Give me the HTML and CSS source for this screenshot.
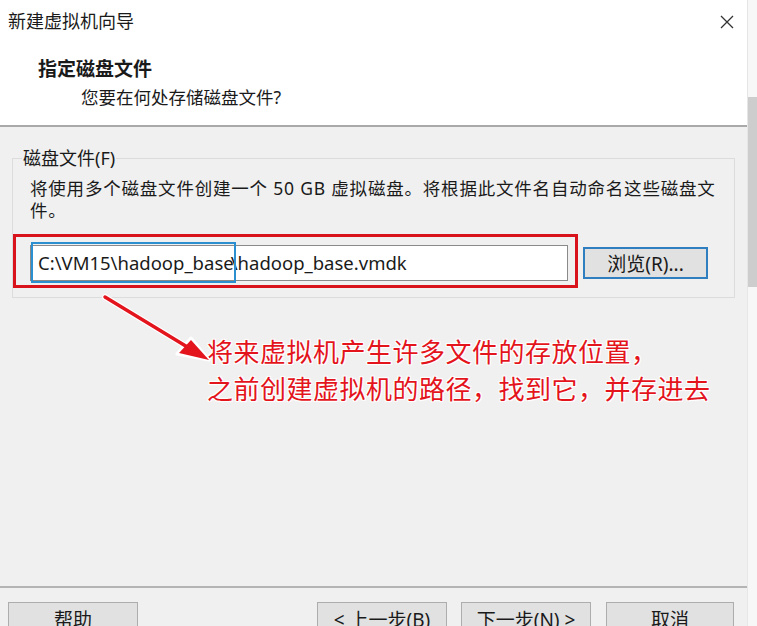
FILE: index.html
```html
<!DOCTYPE html>
<html lang="zh-CN">
<head>
  <meta charset="UTF-8">
  <title>新建虚拟机向导</title>
  <link rel="stylesheet" href="styles.css">
</head>
<body>
  <div class="window">
    <div class="main">
      <!-- Title and page header -->
      <header class="header">
        <div class="titlebar">
          <span class="title">新建虚拟机向导</span>
          <svg class="close" width="14" height="14" viewBox="0 0 14 14">
            <path d="M1 1 L13 13 M13 1 L1 13" stroke="#333" stroke-width="1.3" fill="none"/>
          </svg>
        </div>
        <div class="page-title">指定磁盘文件</div>
        <div class="page-sub">您要在何处存储磁盘文件?</div>
      </header>

      <!-- Disk file group -->
      <section class="content">
        <fieldset class="group">
          <legend>磁盘文件(F)</legend>
          <p class="desc">将使用多个磁盘文件创建一个 50 GB 虚拟磁盘。将根据此文件名自动命名这些磁盘文件。</p>
          <div class="file-row">
            <div class="red-box">
              <div class="path-input">
                <span class="mark">C:\VM15\hadoop_base</span>\hadoop_base.vmdk
              </div>
            </div>
            <button class="btn browse">浏览(R)...</button>
          </div>
        </fieldset>

        <div class="note">
          <svg class="arrow" width="120" height="75" viewBox="0 0 120 75">
            <path d="M8 5 L92 56" stroke="#fff" stroke-width="6" stroke-linecap="round"/>
            <path d="M112 68 L80 62 L94 46 Z" fill="#fff" stroke="#fff" stroke-width="3" stroke-linejoin="round"/>
            <path d="M8 5 L92 56" stroke="#e3141c" stroke-width="3.5" stroke-linecap="round"/>
            <path d="M112 68 L82 61 L94 48 Z" fill="#e3141c"/>
          </svg>
          <p class="note-text">将来虚拟机产生许多文件的存放位置，<br>之前创建虚拟机的路径，找到它，并存进去</p>
        </div>
      </section>

      <!-- Wizard buttons -->
      <footer class="footer">
        <button class="btn">帮助</button>
        <div class="nav-buttons">
          <button class="btn">&lt; 上一步(B)</button>
          <button class="btn">下一步(N) &gt;</button>
          <button class="btn cancel">取消</button>
        </div>
      </footer>
    </div>
    <div class="scrollbar"><div class="thumb"></div></div>
  </div>
</body>
</html>
```
FILE: styles.css
```css
/* Global */
body {
  margin: 0;
  width: 757px;
  height: 626px;
  overflow: hidden;
  background-color: #f0f0f0;
  font-family: "Noto Sans", "Noto Sans CJK SC", sans-serif;
  color: #1a1a1a;
}

.window {
  display: flex;
  height: 626px;
}

.main {
  width: 748px;
  display: flex;
  flex-direction: column;
}

/* Scrollbar strip on the right */
.scrollbar {
  width: 9px;
  background-color: #f7f7f7;
  border-left: 1px solid #e6e6e6;
  padding-top: 97px;
}

.thumb {
  height: 190px;
  background-color: #cdcdcd;
}

/* Header */
.header {
  background-color: #fff;
  height: 127px;
  border-bottom: 2px solid #a9a9a9;
  box-sizing: border-box;
  flex-shrink: 0;
}

.titlebar {
  display: flex;
  justify-content: space-between;
  align-items: center;
  height: 40px;
  padding: 0 13px 0 8px;
  font-size: 18px;
}

.close {
  margin-top: 4px;
}

.page-title {
  font-size: 19px;
  font-weight: bold;
  margin: 17px 0 0 38px;
  line-height: 24px;
}

.page-sub {
  font-size: 17.5px;
  margin: 5px 0 0 81px;
  line-height: 22px;
}

/* Content */
.content {
  flex: 1;
  position: relative;
}

.group {
  margin: 21px 12px 0 12px;
  padding: 0 10px 0 16px;
  border: 1px solid #dcdcdc;
  height: 150px;
  box-sizing: border-box;
}

.group legend {
  font-size: 18px;
  padding: 0 1px;
  margin-left: -7px;
  line-height: 20px;
}

.desc {
  font-size: 17.5px;
  line-height: 22px;
  margin: 9px 0 0 1px;
  letter-spacing: 0.8px;
}

.file-row {
  display: flex;
  align-items: flex-start;
  margin: 13px 0 0 -16px;
}

.red-box {
  border: 3px solid #d8131b;
  padding: 8px 7px 0 14px;
  width: 565px;
  box-sizing: border-box;
  height: 54px;
}

.path-input {
  height: 36px;
  border: 1px solid #8a8a8a;
  background-color: #fff;
  box-sizing: border-box;
  font-size: 18.5px;
  line-height: 34px;
  padding-left: 2px;
  white-space: nowrap;
}

.mark {
  outline: 2px solid #2b8fd0;
  padding: 6px 0 6px 5px;
  margin-right: -3px;
}

.btn {
  font-family: "Noto Sans", "Noto Sans CJK SC", sans-serif;
  font-size: 19px;
  color: #1a1a1a;
  background-color: #e1e1e1;
  border: 1px solid #adadad;
  width: 130px;
  height: 33px;
  padding: 0;
}

.browse {
  width: 125px;
  height: 32px;
  margin: 13px 0 0 5px;
  border: 2px solid #2f7fc0;
}

/* Red annotation */
.note {
  position: relative;
  height: 120px;
}

.arrow {
  position: absolute;
  left: 97px;
  top: -6px;
}

.note-text {
  margin: 0;
  padding: 36px 0 0 207px;
  font-size: 26px;
  line-height: 37px;
  color: #e3141c;
  letter-spacing: 0.5px;
  text-shadow: 1px 1px 0 #fff, -1px -1px 0 #fff, 1px -1px 0 #fff, -1px 1px 0 #fff, 0 0 3px #fff;
}

/* Footer */
.footer {
  border-top: 2px solid #b4b4b4;
  height: 40px;
  display: flex;
  justify-content: space-between;
  padding: 14px 13px 0 8px;
  box-sizing: border-box;
  flex-shrink: 0;
}

.nav-buttons {
  display: flex;
  gap: 14px;
}

.nav-buttons .cancel {
  margin-left: 1px;
  width: 128px;
}
```
